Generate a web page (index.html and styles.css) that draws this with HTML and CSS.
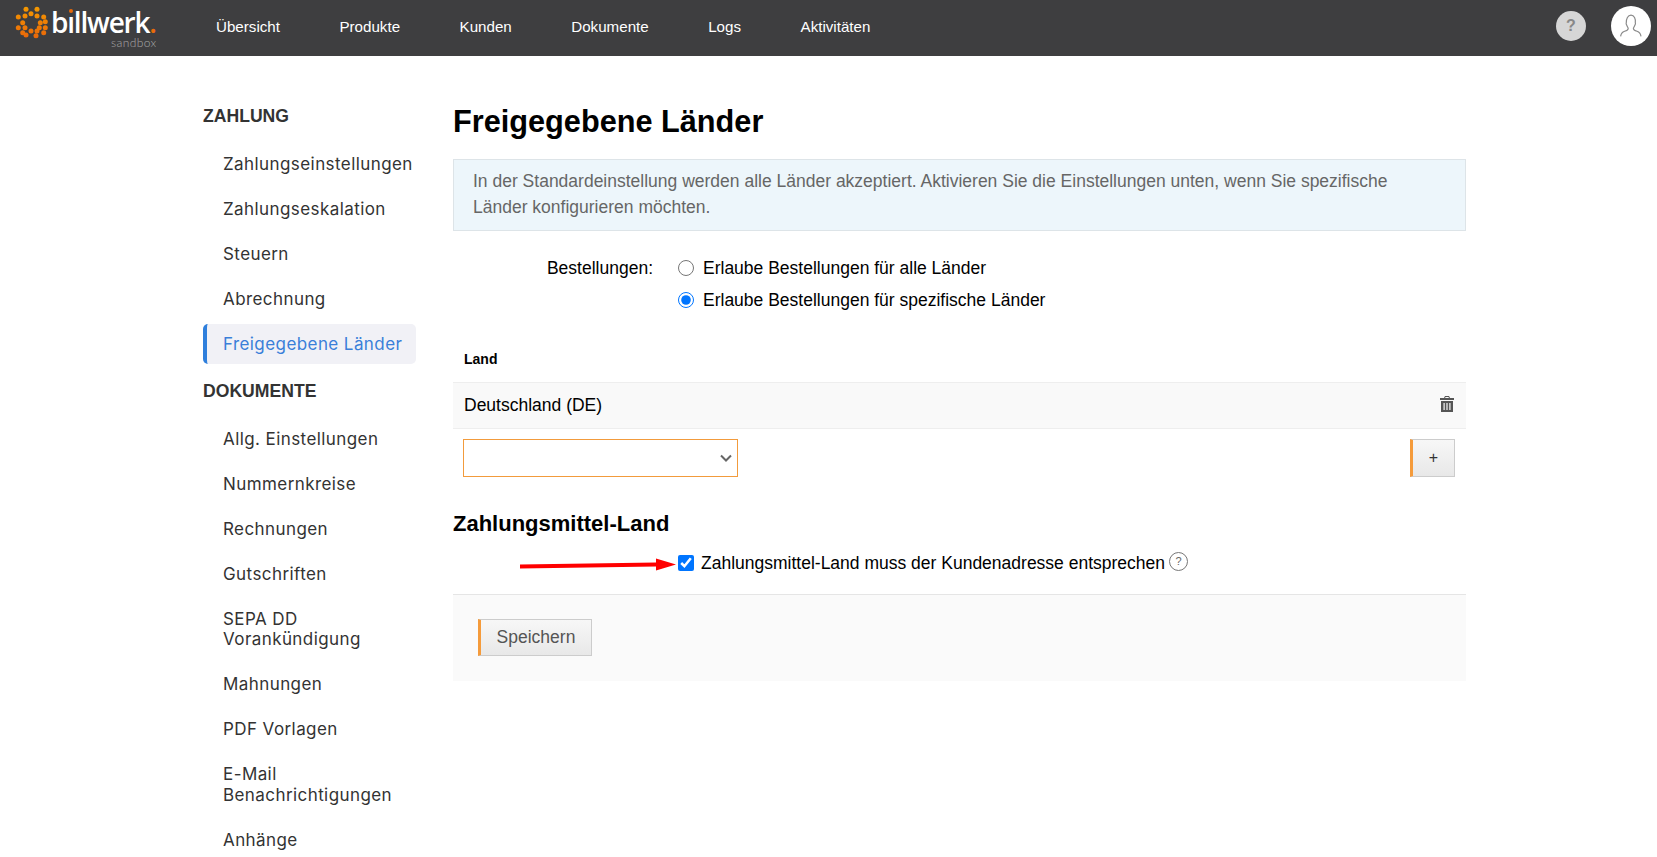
FILE: index.html
```html
<!DOCTYPE html>
<html lang="de">

<head>
  <meta charset="UTF-8">
  <title>Freigegebene Länder</title>
  <link rel="stylesheet" href="styles.css">
</head>

<body>
  <header class="topbar">
    <a class="logo">
      <svg class="logo-mark" width="34" height="34" viewBox="0 0 34 34">
        <defs>
          <linearGradient id="dots" x1="0" y1="0" x2="0" y2="1">
            <stop offset="0" stop-color="#f59a00" />
            <stop offset="1" stop-color="#e8640a" />
          </linearGradient>
        </defs>
        <path fill="url(#dots)" d="M0 0h34v34H0z" mask="url(#ring)" />
        <mask id="ring">
          <g fill="#fff">
            <circle cx="11" cy="3.300" r="2.500" />
            <circle cx="22" cy="3.300" r="2.500" />
            <circle cx="16" cy="7.700" r="2.500" />
            <circle cx="10" cy="10" r="2.500" />
            <circle cx="22" cy="10" r="2.500" />
            <circle cx="28.700" cy="11" r="2.500" />
            <circle cx="3.300" cy="11" r="2.500" />
            <circle cx="30.300" cy="15.700" r="2.500" />
            <circle cx="25.300" cy="16.700" r="2.500" />
            <circle cx="7.700" cy="16.700" r="2.500" />
            <circle cx="3.300" cy="21.700" r="2.500" />
            <circle cx="10" cy="21.700" r="2.500" />
            <circle cx="24.300" cy="21.700" r="2.500" />
            <circle cx="30.300" cy="21.700" r="2.500" />
            <circle cx="7.700" cy="26.700" r="2.500" />
            <circle cx="28.700" cy="26.700" r="2.500" />
            <circle cx="16" cy="25" r="2.500" />
            <circle cx="22" cy="25" r="2.500" />
            <circle cx="11" cy="29" r="2.500" />
            <circle cx="21" cy="29.700" r="2.500" />
          </g>
        </mask>
      </svg>
      <span class="logo-name">b<span class="logo-i">ı</span>llwerk<i>.</i></span>
      <span class="logo-sub">sandbox</span>
    </a>
    <nav class="mainnav">
      <a>Übersicht</a>
      <a>Produkte</a>
      <a>Kunden</a>
      <a>Dokumente</a>
      <a>Logs</a>
      <a>Aktivitäten</a>
    </nav>
    <div class="topbar-right">
      <span class="help-btn">?</span>
      <span class="avatar">
        <svg width="24" height="24" viewBox="0 0 30 30" fill="none" stroke="#8a8a8a" stroke-width="1.500">
          <path d="M2 28c.5-4 2-5.500 5-6.500 2.500-.8 4.500-1.500 4.500-3.500 0-1-1.500-2.500-2-4.500-.5-.5-.8-1.500-.4-2.500C9 6 11 1.500 15 1.500S21 6 20.400 11c.4 1 .1 2-.4 2.500-.5 2-2 3.500-2 4.500 0 2 2 2.700 4.500 3.500 3 1 4.500 2.500 5 6.500" />
        </svg>
      </span>
    </div>
  </header>

  <div class="page">
    <aside class="sidebar">
      <h4>Zahlung</h4>
      <a>Zahlungseinstellungen</a>
      <a>Zahlungseskalation</a>
      <a>Steuern</a>
      <a>Abrechnung</a>
      <a class="active">Freigegebene Länder</a>
      <h4>Dokumente</h4>
      <a>Allg. Einstellungen</a>
      <a>Nummernkreise</a>
      <a>Rechnungen</a>
      <a>Gutschriften</a>
      <a>SEPA DD<br>Vorankündigung</a>
      <a>Mahnungen</a>
      <a>PDF Vorlagen</a>
      <a>E-Mail<br>Benachrichtigungen</a>
      <a>Anhänge</a>
    </aside>

    <main class="content">
      <h1>Freigegebene Länder</h1>
      <div class="info">In der Standardeinstellung werden alle Länder akzeptiert. Aktivieren Sie die Einstellungen unten, wenn Sie spezifische Länder konfigurieren möchten.</div>

      <div class="orders">
        <span class="orders-label">Bestellungen:</span>
        <div class="orders-options">
          <label><input type="radio" name="orders">Erlaube Bestellungen für alle Länder</label>
          <label><input type="radio" name="orders" checked>Erlaube Bestellungen für spezifische Länder</label>
        </div>
      </div>

      <div class="table-head">Land</div>
      <div class="table-row">
        <span>Deutschland (DE)</span>
        <svg class="trash" width="14" height="16" viewBox="0 0 14 16">
          <path fill="#555" d="M5 0h4l1 2h4v2H0V2h4zm.500 1-.400 1h3.800l-.400-1zM1 5h12v11H1zm2.500 2v7h1.200V7zm2.900 0v7h1.200V7zm2.900 0v7h1.200V7z" fill-rule="evenodd" />
        </svg>
      </div>
      <div class="add-row">
        <div class="select-wrap">
          <select class="country-select"></select>
          <svg class="chevron" width="12" height="8" viewBox="0 0 12 8">
            <path d="M1 1.500 6 6.500 11 1.500" fill="none" stroke="#666" stroke-width="2" />
          </svg>
        </div>
        <button type="button" class="btn btn-add">+</button>
      </div>

      <h3>Zahlungsmittel-Land</h3>
      <div class="match-row">
        <svg class="arrow" width="158" height="16" viewBox="0 0 158 16">
          <path fill="#f00" d="M1 7.500 L137 5.500 L137 1.500 L157 7.500 L137 13.500 L137 9.500 L1 11.500 Z" />
        </svg>
        <label><input type="checkbox" checked>Zahlungsmittel-Land muss der Kundenadresse entsprechen</label>
        <span class="hint">?</span>
      </div>

      <div class="form-footer">
        <button type="button" class="btn btn-save">Speichern</button>
      </div>
    </main>
  </div>
</body>

</html>
```

FILE: styles.css
```css
* {
  box-sizing: border-box;
}

html,
body {
  height: 857px;
  overflow: hidden;
}

body {
  margin: 0;
  font-family: "Liberation Sans", Arial, sans-serif;
  font-size: 17.5px;
  color: #000;
  background: #fff;
}

.topbar {
  display: flex;
  align-items: center;
  height: 56px;
  padding: 0 6px 4px 15px;
  background: #3e3e40;
}

.logo {
  position: relative;
  display: flex;
  align-items: flex-start;
  width: 201px;
  height: 52px;
  padding-top: 6px;
}

.logo-name {
  margin: 1px 0 0 2px;
  color: #fff;
  font-family: "Open Sans", sans-serif;
  font-size: 28px;
  font-weight: 600;
  letter-spacing: -1.2px;
  line-height: 30px;
}

.logo-name i {
  color: #e86a0a;
  font-style: normal;
}

.logo-i {
  position: relative;
}

.logo-i::before {
  content: "";
  position: absolute;
  left: 1.5px;
  top: 6px;
  width: 4px;
  height: 4px;
  border-radius: 50%;
  background: #e86a0a;
}

.logo-sub {
  position: absolute;
  left: 96px;
  top: 38px;
  color: #aaa;
  font-family: Lato, sans-serif;
  font-size: 12px;
  font-weight: 300;
  letter-spacing: 0.4px;
  line-height: 10px;
}

.mainnav {
  display: flex;
  gap: 59.5px;
  margin-top: 1px;
  font-size: 15.15px;
  color: #fff;
}

.topbar-right {
  display: flex;
  align-items: center;
  gap: 25px;
  margin-left: auto;
}

.help-btn {
  display: flex;
  align-items: center;
  justify-content: center;
  width: 30px;
  height: 30px;
  border-radius: 50%;
  background: #d6d6d6;
  color: #888;
  font-size: 16px;
  font-weight: bold;
}

.avatar {
  display: flex;
  align-items: center;
  justify-content: center;
  width: 40px;
  height: 40px;
  border-radius: 50%;
  background: #fff;
}

.page {
  display: flex;
  padding-left: 203px;
}

.sidebar {
  flex: none;
  width: 250px;
  padding-top: 49px;
  padding-right: 37px;
  font-family: Inter, sans-serif;
  color: #333;
}

.sidebar h4 {
  margin: 0;
  font-family: "Liberation Sans", Arial, sans-serif;
  font-size: 17.6px;
  font-weight: 700;
  line-height: 22px;
  text-transform: uppercase;
  color: #333;
}

.sidebar a {
  display: block;
  margin-top: 5px;
  padding: 9.75px 0 9.75px 20px;
  border-radius: 5px;
  font-size: 17px;
  line-height: 20.5px;
  letter-spacing: 0.42px;
  white-space: nowrap;
}

.sidebar h4 + a {
  margin-top: 17px;
}

.sidebar a.active {
  padding-left: 16px;
  border-left: 4px solid #2f7fdc;
  background: #f1f1f6;
  color: #3a7fd9;
}

.sidebar a.active + h4 {
  margin-top: 16px;
}

.content {
  flex: none;
  width: 1013px;
  padding-top: 48px;
}

.content h1 {
  margin: 0 0 19px;
  font-size: 30.7px;
  line-height: 36px;
  font-weight: bold;
}

.info {
  height: 72px;
  padding: 9px 19px;
  border: 1px solid #dde4e8;
  background: #edf6fb;
  color: #666;
  line-height: 25.5px;
}

.orders {
  display: flex;
  margin-top: 26px;
}

.orders-label {
  width: 200px;
  line-height: 22px;
  text-align: right;
}

.orders-options {
  display: flex;
  flex-direction: column;
  gap: 10px;
  margin-left: 25px;
}

.orders-options label {
  display: flex;
  align-items: center;
  height: 22px;
}

.orders-options input {
  width: 16px;
  height: 16px;
  margin: 0 9px 0 0;
}

.table-head {
  margin-top: 36px;
  padding: 0 11px;
  font-size: 14px;
  font-weight: bold;
  line-height: 24px;
}

.table-row {
  display: flex;
  align-items: center;
  justify-content: space-between;
  height: 47px;
  margin-top: 11px;
  padding: 0 12px 0 11px;
  border-top: 1px solid #eee;
  border-bottom: 1px solid #eee;
  background: #f9f9f9;
}

.trash {
  margin-bottom: 4px;
}

.add-row {
  display: flex;
  align-items: center;
  justify-content: space-between;
  margin-top: 10px;
  padding: 0 11px 0 10px;
}

.select-wrap {
  position: relative;
  display: flex;
}

.country-select {
  width: 275px;
  height: 38px;
  border: 1px solid #f29b3c;
  border-radius: 0;
  background: #fff;
  appearance: none;
}

.chevron {
  position: absolute;
  right: 6px;
  top: 15px;
}

.btn {
  border: 1px solid #ccc;
  border-left: 3px solid #f59b3b;
  border-radius: 0;
  background: linear-gradient(#f7f7f7, #e8e8e8);
  color: #555;
  font-family: inherit;
  font-size: 17.5px;
}

.btn-add {
  width: 45px;
  height: 38px;
  color: #333;
  font-size: 16px;
}

.content h3 {
  margin: 35px 0 0;
  font-size: 22px;
  line-height: 24px;
  font-weight: bold;
}

.match-row {
  position: relative;
  display: flex;
  align-items: center;
  height: 26px;
  margin-top: 14px;
  padding-left: 225px;
}

.match-row label {
  display: flex;
  align-items: center;
}

.match-row input {
  width: 16px;
  height: 16px;
  margin: 0 7px 0 0;
}

.arrow {
  position: absolute;
  left: 66px;
  top: 7px;
}

.hint {
  display: flex;
  align-items: center;
  justify-content: center;
  width: 19px;
  height: 19px;
  margin: -4px 0 0 4px;
  border: 1px solid #777;
  border-radius: 50%;
  color: #666;
  font-size: 11px;
}

.form-footer {
  height: 87px;
  margin-top: 18px;
  padding: 24px 25px;
  border-top: 1px solid #e5e5e5;
  background: #fafafa;
}

.btn-save {
  width: 114px;
  height: 37px;
}
```
